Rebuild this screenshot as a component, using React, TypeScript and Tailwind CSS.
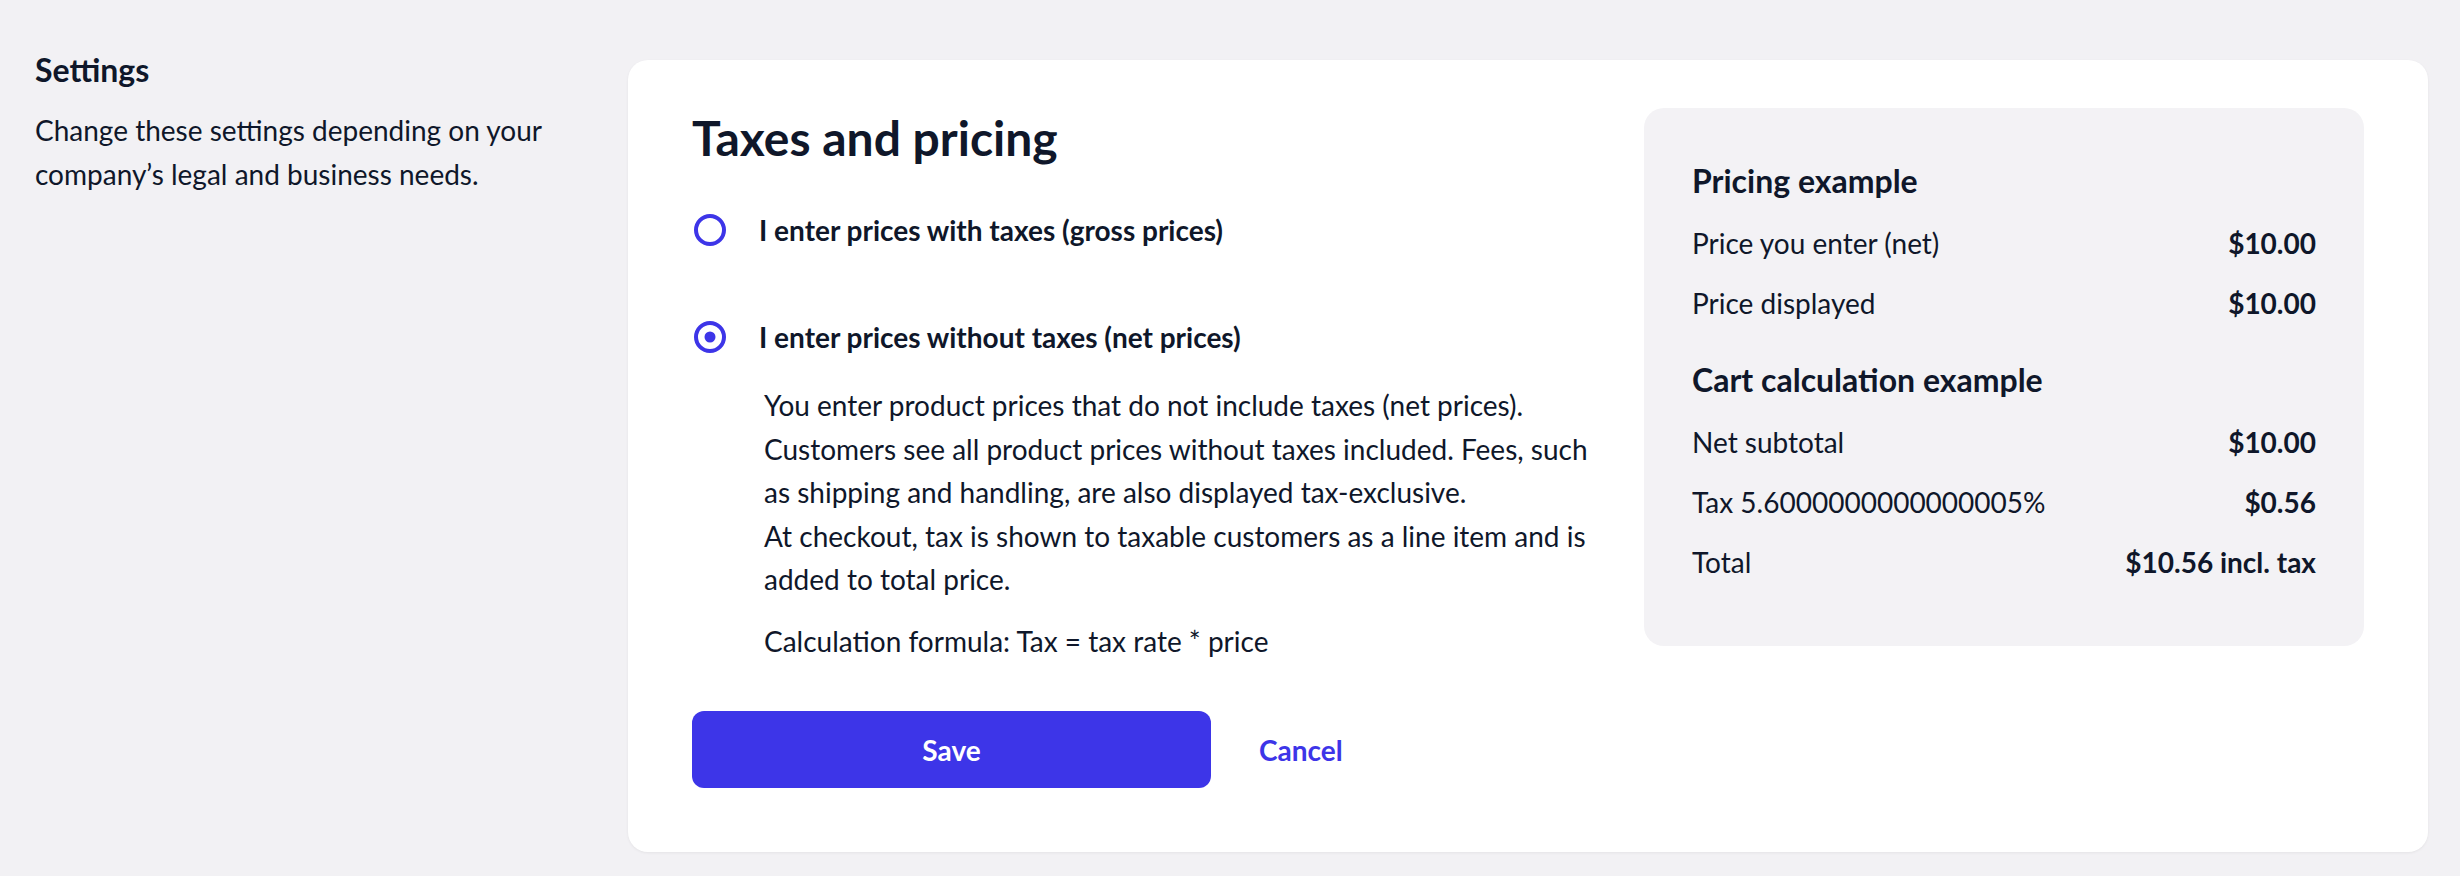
import React, { useState } from "react";

const ACCENT = "#3d35e8";

function Radio({ checked }: { checked: boolean }) {
  return (
    <svg width="36" height="36" viewBox="0 0 36 36" className="shrink-0">
      <circle cx="18" cy="18" r="14" fill="none" stroke={ACCENT} strokeWidth="4" />
      {checked && <circle cx="18" cy="18" r="5.5" fill={ACCENT} />}
    </svg>
  );
}

function Row({ label, value }: { label: string; value: string }) {
  return (
    <div className="flex items-center justify-between text-[28px] leading-[42px]">
      <span>{label}</span>
      <span className="font-bold">{value}</span>
    </div>
  );
}

export default function App() {
  const [mode, setMode] = useState<"gross" | "net">("net");

  return (
    <div className="min-h-screen bg-[#f2f1f4] font-['Lato',sans-serif] text-[#0f172a] flex items-start gap-[32px] px-[32px] pt-[50px] pb-[23px]">
      {/* Left description */}
      <div className="w-[564px] shrink-0 pl-[3px]">
        <h2 className="text-[32px] leading-[40px] font-bold">Settings</h2>
        <p className="mt-[18px] text-[28px] leading-[44px]">
          Change these settings depending on your company’s legal and business needs.
        </p>
      </div>

      {/* Main card */}
      <div className="flex-1 mt-[10px] bg-white rounded-[20px] shadow-[0_1px_3px_rgba(0,0,0,0.06)] pt-[48px] px-[64px] pb-[64px]">
        <div className="flex items-start gap-[48px]">
          <div className="flex-1 flex flex-col">
            <h1 className="text-[48px] leading-[60px] font-bold">Taxes and pricing</h1>

            <button
              onClick={() => setMode("gross")}
              className="mt-[41px] flex items-center gap-[31px] h-[42px] text-left"
            >
              <Radio checked={mode === "gross"} />
              <span className="text-[28px] leading-[42px] font-bold">I enter prices with taxes (gross prices)</span>
            </button>

            <button
              onClick={() => setMode("net")}
              className="mt-[65px] flex items-center gap-[31px] h-[42px] text-left"
            >
              <Radio checked={mode === "net"} />
              <span className="text-[28px] leading-[42px] font-bold">I enter prices without taxes (net prices)</span>
            </button>

            <div className="mt-[26px] pl-[72px] text-[28px] leading-[43.5px]">
              <p>
                You enter product prices that do not include taxes (net prices). Customers see all product prices
                without taxes included. Fees, such as shipping and handling, are also displayed tax-exclusive.
              </p>
              <p>At checkout, tax is shown to taxable customers as a line item and is added to total price.</p>
              <p className="mt-[18px]">Calculation formula: Tax = tax rate * price</p>
            </div>

            <div className="mt-[48px] flex items-center gap-[48px]">
              <button className="w-[519px] h-[77px] rounded-[12px] bg-[#3d35e8] text-white text-[28px] font-bold">
                Save
              </button>
              <button className="text-[28px] font-bold text-[#3d35e8]">Cancel</button>
            </div>
          </div>

          {/* Pricing example panel */}
          <div className="w-[720px] shrink-0 rounded-[20px] bg-[#f3f2f5] px-[48px] pt-[52px] pb-[63px]">
            <div className="flex flex-col gap-[18px]">
              <h3 className="text-[32px] leading-[42px] font-bold mb-[2px]">Pricing example</h3>
              <Row label="Price you enter (net)" value="$10.00" />
              <Row label="Price displayed" value="$10.00" />
            </div>
            <div className="mt-[35px] flex flex-col gap-[18px]">
              <h3 className="text-[32px] leading-[42px] font-bold mb-[2px]">Cart calculation example</h3>
              <Row label="Net subtotal" value="$10.00" />
              <Row label="Tax 5.6000000000000005%" value="$0.56" />
              <Row label="Total" value="$10.56 incl. tax" />
            </div>
          </div>
        </div>
      </div>
    </div>
  );
}
